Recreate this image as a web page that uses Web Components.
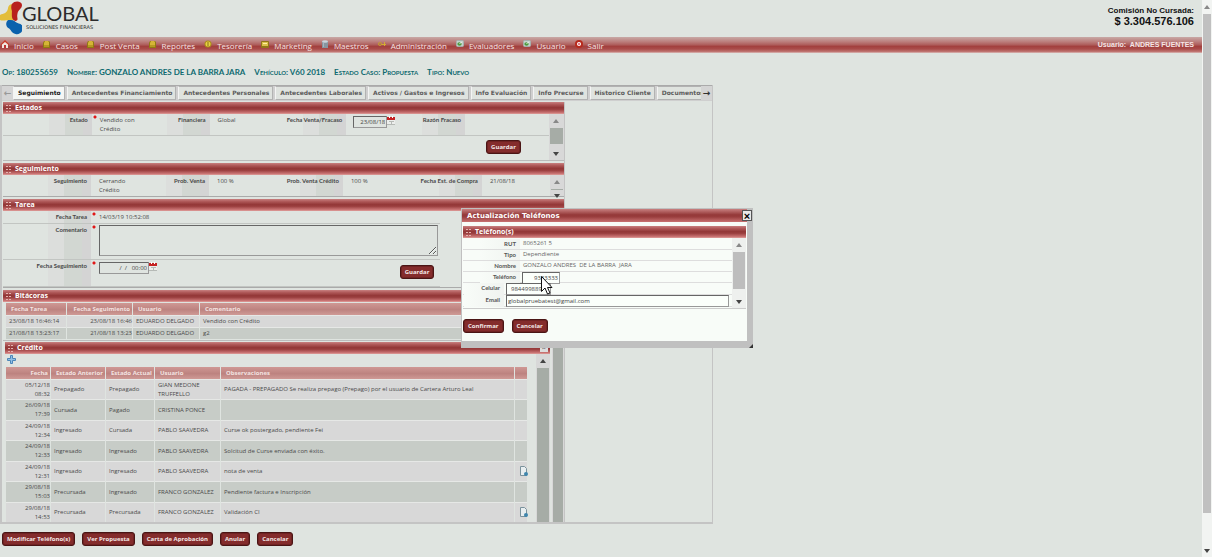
<!DOCTYPE html>
<html lang="es">
<head>
<meta charset="utf-8">
<title>Global Soluciones Financieras</title>
<style>
html,body{margin:0;height:100%}
body{background:#dfe4e0;font:6px/9px "Open Sans",sans-serif;color:#4a4a4a;overflow:hidden}
</style>
</head>
<body>
<credit-app></credit-app>
<script>
const define=(name,html,setup)=>customElements.define(name,class extends HTMLElement{
  connectedCallback(){
    if(this.shadowRoot)return;
    const t=document.createElement('template');
    t.innerHTML=typeof html==='function'?html(this):html;
    this.attachShadow({mode:'open'}).append(t.content.cloneNode(true));
    if(setup)setup(this,this.shadowRoot);
  }
});

define('action-button',`<style>
:host{display:block}
button{display:block;box-sizing:border-box;height:14px;padding:0 4px;border:1px solid #4a1515;border-radius:3px;background:#842c2c;color:#f3e8e8;font:bold 6px/10px "Open Sans",sans-serif;white-space:nowrap;box-shadow:inset 0 0 0 1px #702323}
</style><button type="button"><slot></slot></button>`);

define('scroll-track',`<style>
:host{display:flex;flex-direction:column;align-items:center;box-sizing:border-box;background:var(--track,#d8d8d8);padding:0 1px}
i{flex:none;border:3px solid transparent;width:0;height:0}
.u{border-top:0;border-bottom:4px solid var(--up,#888);margin:5px 0}
.d{border-bottom:0;border-top:4px solid #444;margin:4px 0}
b{width:100%;height:var(--thumb,auto);flex:var(--grow,0 0 auto);background:var(--bar,#a6aca6)}
span{flex:var(--rest,0)}
:host([open]) .d,:host([bare]) i{display:none}
</style><i class="u"></i><b></b><span></span><i class="d"></i>`);

define('title-bar',`<style>
:host{display:flex;align-items:center;box-sizing:border-box;height:12px;padding:0 2px 0 3px;gap:4px;background:linear-gradient(#c88080 0,#b05a5a 20%,#943838 45%,#993d3d 60%,#c87272 88%,#dfa09c);color:#fff}
h2{flex:1;margin:0;font:bold 7px/10px "Open Sans",sans-serif;white-space:nowrap}
svg{flex:none}
</style><svg width="5" height="8" fill="#e3b3b0"><path d="M0 1h2v1H0zM3 1h2v1H3zM0 4h2v1H0zM3 4h2v1H3zM0 7h2v1H0zM3 7h2v1H3z"/></svg><h2><slot></slot></h2><slot name="tool"></slot>`);

define('calendar-icon',`<style>:host{display:block;height:9px}svg{display:block}</style>
<svg width="8" height="9"><path fill="#eceeec" d="M0 2h8v7H0z"/><path fill="#c42222" d="M0 1h8v3H0z"/><path fill="#fff" d="M2 0h1v2H2zM5 0h1v2H5z"/><path stroke="#b6bab6" fill="none" d="M0 8.5h8M2 5.500h5M4.500 5v4"/></svg>`);

const icons={
 home:'<path fill="#c83a28" d="M0 4 4 0l4 4v1H0z"/><path fill="#f2e7e0" d="M1 4.500 4 2l3 2.500V8H1z"/><path fill="#b33" d="M3 5h2v3H3z"/>',
 folder:'<path fill="#8f7a12" d="M1 1h5l1 1v6H0V3z"/><path fill="#d5b536" d="M2 1h3l1 1v3H1V3z"/><path fill="#b89822" d="M1 5h5v2H1z"/>',
 coin:'<circle cx="4" cy="4" r="3.500" fill="#a88c1a"/><circle cx="4" cy="4" r="2.500" fill="#e8d044"/><path stroke="#8a7314" d="M4 2v4"/>',
 card:'<rect y="1" width="8" height="7" rx="1" fill="#927718"/><rect x="1" y="2" width="6" height="4" fill="#dcc04a"/><path stroke="#fff0a0" d="M2 3.500h4"/>',
 db:'<path fill="#8795a0" d="M1 1h6v7H1z"/><ellipse cx="4" cy="1.500" rx="3" ry="1.300" fill="#cbd5dc"/><path stroke="#a9b4bd" d="M2.500 3v4"/>',
 key:'<circle cx="2" cy="4" r="1.500" fill="none" stroke="#c3a02c"/><path stroke="#d3ad33" d="M3.500 4.500H8M6.500 2v4"/>',
 check:'<rect x=".5" y=".5" width="7" height="6" rx="1" fill="#c4d1cc" stroke="#a6b0ae"/><ellipse cx="3.500" cy="4" rx="2.200" ry="1.700" fill="#4d9c3e"/><path stroke="#e9f2e6" d="M3.500 3.500 6 2"/>',
 exit:'<circle cx="4" cy="4" r="4" fill="#b72a1d"/><circle cx="4" cy="4" r="2" fill="#fff"/><circle cx="4" cy="4" r="1" fill="#d56"/>'
};
define('menu-item',el=>`<style>
:host{display:flex;align-items:center;gap:5px}
a{color:#f5e4e4;text-decoration:none;font:8px/12px "Open Sans",sans-serif;white-space:nowrap;padding-top:1px}
svg{flex:none;margin-bottom:3px}
</style><svg width="8" height="8">${icons[el.getAttribute('icon')]}</svg><a href="#"><slot></slot></a>`);

define('main-menu',`<style>
:host{display:flex;align-items:center;box-sizing:border-box;height:16px;padding:0 8px 0 1px;background:linear-gradient(#c8a9a6 0,#bb7d7b 30%,#ad5b59 50%,#a23f3d 58%,#aa4c4a 75%,#c07673 92%,#ddc0bd)}
nav{display:flex;gap:9px}
p{margin:0 0 0 auto;color:#f6e6e6;font:bold 7px/12px "Liberation Sans",sans-serif;white-space:pre}
</style><nav>
<menu-item icon="home">Inicio</menu-item><menu-item icon="folder">Casos</menu-item><menu-item icon="folder">Post Venta</menu-item><menu-item icon="folder">Reportes</menu-item><menu-item icon="coin">Tesorería</menu-item><menu-item icon="card">Marketing</menu-item><menu-item icon="db">Maestros</menu-item><menu-item icon="key">Administración</menu-item><menu-item icon="check">Evaluadores</menu-item><menu-item icon="check">Usuario</menu-item><menu-item icon="exit">Salir</menu-item>
</nav><p>Usuario:  ANDRES FUENTES</p>`);

define('brand-header',`<style>
:host{display:flex;justify-content:space-between;height:37px}
.logo{display:flex}
.name{padding:2px 0 0;color:#2c2c2c}
.name b{display:block;font:20px/22px Lato,sans-serif}
.name small{display:block;padding-left:4px;font:5px/6px "DejaVu Sans",sans-serif}
.sum{padding:6px 8px 0 0;text-align:right;color:#111;font:bold 8px/10px "Liberation Sans",sans-serif}
.sum strong{display:block;font-size:11px;line-height:11px}
</style>
<div class="logo"><svg width="22" height="36" viewBox="0 0 24 36" preserveAspectRatio="none"><path fill="#e3bd3a" d="M0 15c4-2 8-1 9-8 1-3 5-4 5-1-1 7 0 10 2 13l-5 4c-2-5-7-1-11-3z"/><path fill="#b8201d" d="M13 4c3-4 11-3 11 1 0 4-4 4-5 9-1 4 2 6-2 7-5-1-4-6-4-10-1-3-1-5 0-7z"/><path fill="#0b62ad" d="M9 20c4 0 6 0 8 2 2 2 8 1 8 6 0 4-4 7-8 6-5-1-5-5-8-6-3-2-3-6 0-8z"/></svg>
<div class="name"><b>GLOBAL</b><small>SOLUCIONES FINANCIERAS</small></div></div>
<div class="sum">Comisión No Cursada:<strong>$ 3.304.576.106</strong></div>`);

define('case-summary',`<style>
:host{display:flex;gap:9px;padding:12px 2px 6px;font:bold small-caps 8px/14px Lato,sans-serif;color:#0d6a6f;white-space:nowrap}
</style><span>Op: 180255659</span><span>Nombre: GONZALO ANDRES DE LA BARRA JARA</span><span>Vehículo: V60 2018</span><span>Estado Caso: Propuesta</span><span>Tipo: Nuevo</span>`);

define('case-tabs',`<style>
:host{display:flex;height:16px;background:#cfcfcf;border-top:1px solid #aaa;box-sizing:border-box;overflow:hidden}
.t{display:flex;gap:2px;flex:1;overflow:hidden}
button{flex:none;height:14px;margin:0;padding:0 3px 0 4px;border:1px solid #b2b2b2;border-left-color:#f4f4f4;background:#dfe3df;color:#5c5c5c;font:bold 6px/12px "DejaVu Sans",sans-serif}
button[aria-selected=true]{background:#f4f6f4;color:#222}
.a{width:11px;padding:0;border:0;background:#d4d4d4;font-size:9px;color:#999}
.n{color:#333}
</style><button class="a" aria-label="Anterior">←</button><div class="t" role="tablist"></div><button class="a n" aria-label="Siguiente">→</button>`,(el,r)=>{
 const t=r.querySelector('.t');
 ['Seguimiento','Antecedentes Financiamiento','Antecedentes Personales','Antecedentes Laborales','Activos / Gastos e Ingresos','Info Evaluación','Info Precurse','Historico Cliente','Documentos'].forEach((n,i)=>{
  const b=document.createElement('button');b.setAttribute('role','tab');b.setAttribute('aria-selected',i===0);b.textContent=n;t.append(b);});
});

const fieldCss=`
.k{box-sizing:border-box;text-align:right;padding:2px 4px 0 0;font:bold 6px/8px Lato,sans-serif;color:#484848;white-space:nowrap;background:linear-gradient(90deg,#dcdedc 16px,#d2d7d2 16px 34px,#d4d4d4 34px) right/43px 100% no-repeat}
.v{box-sizing:border-box;padding:2px 0 0 8px;line-height:9px}
.req{background:radial-gradient(circle at 3px 3px,#e01818 1px,transparent 2px) no-repeat}
input,textarea{box-sizing:border-box;margin:0;border:1px solid #999;border-top-color:#666;border-left-color:#666;background:transparent;color:#444;font:6px/9px "Open Sans",sans-serif;padding:0 1px}
.dt{display:flex}`;

define('status-panel',`<style>${fieldCss}
:host{display:flex;height:46px;border-bottom:1px solid #bbb;margin-bottom:2px}
.c{flex:1}
.g{display:grid;grid-template-columns:89fr 55fr 63fr 60fr 77fr 63fr 56fr 84fr;height:21px;border-bottom:1px solid #c2c5c2}
.dt{padding:2px 0 0 7px}input{width:34px;height:12px;text-align:right}
.b{display:flex;justify-content:flex-end;padding:4px 28px 0 0}
scroll-track{width:15px;--thumb:16px;--rest:1}
</style><div class="c"><div class="g"><label class="k">Estado</label><div class="v req">Vendido con Crédito</div><label class="k">Financiera</label><div class="v">Global</div><label class="k" for="f">Fecha Venta/Fracaso</label><div class="dt"><input id="f" value="23/08/18"><calendar-icon></calendar-icon></div><label class="k">Razón Fracaso</label><div></div></div>
<div class="b"><action-button>Guardar</action-button></div></div><scroll-track></scroll-track>`);

define('followup-panel',`<style>${fieldCss}
:host{display:flex;height:21px;border-bottom:1px solid #aaa;margin-bottom:2px}
.g{flex:1;display:grid;grid-template-columns:88fr 55fr 63fr 60fr 74fr 65fr 74fr 68fr}
scroll-track{width:14px;--thumb:1px;--rest:1}
</style><div class="g"><label class="k">Seguimiento</label><div class="v">Cerrando Crédito</div><label class="k">Prob. Venta</label><div class="v">100 %</div><label class="k">Prob. Venta Crédito</label><div class="v">100 %</div><label class="k">Fecha Est. de Compra</label><div class="v">21/08/18</div></div><scroll-track></scroll-track>`);

define('task-panel',`<style>${fieldCss}
:host{display:block;border-bottom:1px solid #aaa;margin-bottom:2px}
.r{display:grid;grid-template-columns:88px 1fr;width:78%;border-bottom:1px solid #c2c5c2}
.k{padding-top:2px}
.one{height:12px}.two{height:35px}.three{height:26px}
textarea{display:block;width:100%;height:31px;resize:both}
.two .v{padding-top:1px;padding-right:2px}
.three .v{display:flex}input{width:50px;height:12px;text-align:right}
action-button{margin:3px 6px 0 auto}
</style><div class="r one"><label class="k">Fecha Tarea</label><div class="v req">14/03/19 10:52:08</div></div>
<div class="r two"><label class="k" for="c">Comentario</label><div class="v req"><textarea id="c"></textarea></div></div>
<div class="r three"><label class="k" for="s">Fecha Seguimiento</label><div class="v req"><input id="s" value="/  /   00:00"><calendar-icon></calendar-icon><action-button>Guardar</action-button></div></div>`);

const tableCss=`
table{border-collapse:separate;border-spacing:1px 0;table-layout:fixed;width:100%}
th{height:12px;padding:0 3px 0 5px;text-align:left;color:#f4e4e2;font:bold 6px/11px "Open Sans",sans-serif;background:linear-gradient(#cf9894,#bd8380 55%,#cf9a96);white-space:nowrap}
td{padding:0 3px;line-height:9px;background:#d8d8d8;border-top:1px solid #e6e8e6}
tr:nth-child(even) td{background:#c7ccc7}
.n{text-align:right;padding-right:0}th.n{padding-left:0;padding-right:2px}`;

define('log-table',`<style>${tableCss}
:host{display:block;padding:1px 16px 0 2px;border-bottom:1px solid #bbb;margin:0 0 1px;height:37px}
td{height:11px;white-space:nowrap}
</style><table><colgroup><col style="width:60px"><col style="width:65px"><col style="width:66px"><col></colgroup>
<thead><tr><th>Fecha Tarea</th><th class="n">Fecha Seguimiento</th><th>Usuario</th><th>Comentario</th></tr></thead>
<tbody><tr><td>23/08/18 16:46:14</td><td class="n">23/08/18 16:46</td><td>EDUARDO DELGADO</td><td>Vendido con Crédito</td></tr>
<tr><td>21/08/18 13:23:17</td><td class="n">21/08/18 13:23</td><td>EDUARDO DELGADO</td><td>g2</td></tr></tbody></table>`);

define('credit-table',`<style>${tableCss}
:host{display:block;padding:0 8px 0 0}
.add{display:block;border:0;background:none;padding:0;margin:0 0 3px 2px;height:10px}
.add svg{display:block}
td{height:19px}tr:nth-child(even) td{height:20px}
td svg{display:block;margin-left:2px}
</style><button class="add" aria-label="Agregar"><svg width="9" height="9"><path fill="#8fc0e6" stroke="#4c86b8" d="M3.500.5h2v3h3v2h-3v3h-2v-3h-3v-2h3z"/></svg></button>
<table><colgroup><col style="width:44px"><col style="width:54px"><col style="width:48px"><col style="width:65px"><col><col style="width:12px"></colgroup>
<thead><tr><th class="n">Fecha</th><th>Estado Anterior</th><th>Estado Actual</th><th>Usuario</th><th>Observaciones</th><th></th></tr></thead><tbody></tbody></table>`,(el,r)=>{
 const doc='<svg width="8" height="11"><path fill="#e8eef0" stroke="#7a929c" d="M.5.5h4l2 2v7h-6z"/><circle cx="6" cy="8" r="2" fill="#3f86ad"/></svg>';
 r.querySelector('tbody').innerHTML=[
 ['05/12/18','08:32','Prepagado','Prepagado','GIAN MEDONE TRUFFELLO','PAGADA - PREPAGADO Se realiza prepago (Prepago) por el usuario de Cartera Arturo Leal'],
 ['26/09/18','17:39','Cursada','Pagado','CRISTINA PONCE',''],
 ['24/09/18','12:34','Ingresado','Cursada','PABLO SAAVEDRA','Curse ok postergado, pendiente Fei'],
 ['24/09/18','12:33','Ingresado','Ingresado','PABLO SAAVEDRA','Solcitud de Curse enviada con éxito.'],
 ['24/09/18','12:31','Ingresado','Ingresado','PABLO SAAVEDRA','nota de venta',1],
 ['29/08/18','15:03','Precursada','Ingresado','FRANCO GONZALEZ','Pendiente factura e Inscripción'],
 ['29/08/18','14:53','Precursada','Precursada','FRANCO GONZALEZ','Validación CI',1]
 ].map(([d,h,a,b,u,o,f])=>`<tr><td class="n">${d}<br>${h}</td><td>${a}</td><td>${b}</td><td>${u}</td><td>${o}</td><td>${f?doc:''}</td></tr>`).join('');
});

define('phone-dialog',`<style>${fieldCss}
:host{display:block;box-sizing:border-box;background:#f8fcf8;border:1px solid #c0c0c0;border-width:1px 6px 7px 1px;color:#666}
header{display:flex;align-items:center;height:13px;padding:0 0 0 5px;background:linear-gradient(#c88080,#943838 45%,#993d3d 60%,#c87272);color:#fff}
h1{flex:1;margin:0;font:bold 7px/12px "DejaVu Sans",sans-serif}
.x{width:10px;height:11px;padding:0;margin:0 -5px 0 0;border:1px solid #555;background:#e8e8e8;color:#000;font:bold 11px/8px "Liberation Sans",sans-serif}
.box{display:flex;margin:4px 1px 0 1px;border-bottom:1px solid #ccc;height:82px;flex-direction:column}
.m{display:flex;flex:1}.f{flex:1;padding-top:1px}
.r{display:grid;grid-template-columns:57px 1fr;height:10px;border-bottom:1px solid #ddd}
.r.s{grid-template-columns:41px 1fr;height:11px}
.k{padding-top:1px;background:linear-gradient(90deg,#f8fcf8,#f0f3f0) right/40px 100% no-repeat;color:#555}
.v{padding:0 0 0 3px;white-space:pre}
.t{width:38px;text-align:right}.r input{height:12px;display:block;background:#fbfffb}
.c{width:45px;padding-left:4px}.e{width:100%}
.v.i{padding:0 3px 0 2px}
scroll-track{width:14px;--thumb:37px;--rest:1;--track:#eef0ee;--bar:#bdbdbd}
footer{display:flex;gap:8px;padding:10px 1px 0}
</style><header><h1>Actualización Teléfonos</h1><button class="x" aria-label="Cerrar">×</button></header>
<div class="box"><title-bar>Teléfono(s)</title-bar><div class="m"><div class="f">
<div class="r"><label class="k">RUT</label><div class="v">8065261 5</div></div>
<div class="r"><label class="k">Tipo</label><div class="v">Dependiente</div></div>
<div class="r"><label class="k">Nombre</label><div class="v">GONZALO ANDRES  DE LA BARRA  JARA</div></div>
<div class="r"><label class="k" for="t">Teléfono</label><div class="v i"><input id="t" class="t" value="9333333"></div></div>
<div class="r s"><label class="k" for="c">Celular</label><div class="v i"><input id="c" class="c" value="984499889"></div></div>
<div class="r s"><label class="k" for="e">Email</label><div class="v i"><input id="e" class="e" value="globalpruebatest@gmail.com"></div></div>
</div><scroll-track></scroll-track></div></div>
<footer><action-button>Confirmar</action-button><action-button>Cancelar</action-button></footer>`);

define('credit-app',`<style>
:host{display:grid;grid-template-columns:1fr 10px;height:100%}
.page{position:relative;min-width:0}
.main{width:min(100%,713px);box-sizing:border-box;border:2px solid #c4c4c4;border-width:0 1px 2px 2px}
.left{width:79%;margin-top:1px;padding-left:1px;border-right:1px solid #c4c4c4}
.credit{display:flex;gap:2px}
.win{flex:1;margin-left:2px}
.in{display:flex}.in credit-table{flex:1}
.in scroll-track{width:14px;--grow:1}
.outer{width:12px;--grow:1;--rest:0}
.x{width:8px;height:8px;padding:0;border:0;background:#ddd;color:#555;font:7px/8px "Liberation Sans",sans-serif}
phone-dialog{position:absolute;left:461px;top:208px;width:292px;height:140px}
.cur{position:absolute;left:541px;top:276px}
.grip{position:absolute;left:749px;top:344px}
footer{display:flex;gap:7px;padding:8px 2px}
.ps{--track:#f2f4f2;--bar:#c0c0c0;--grow:10;--rest:0 0 32px}
</style>
<div class="page"><brand-header></brand-header><main-menu></main-menu><case-summary></case-summary>
<div class="main"><case-tabs></case-tabs><div class="left">
<title-bar>Estados</title-bar><status-panel></status-panel>
<title-bar>Seguimiento</title-bar><followup-panel></followup-panel>
<title-bar>Tarea</title-bar><task-panel></task-panel>
<title-bar>Bitácoras</title-bar><log-table></log-table>
<div class="credit"><div class="win"><title-bar>Crédito<button class="x" slot="tool" aria-label="Cerrar">×</button></title-bar><div class="in"><credit-table></credit-table><scroll-track open style="--up:#444"></scroll-track></div></div><scroll-track class="outer" bare></scroll-track></div>
</div></div>
<footer><action-button>Modificar Teléfono(s)</action-button><action-button>Ver Propuesta</action-button><action-button>Carta de Aprobación</action-button><action-button>Anular</action-button><action-button>Cancelar</action-button></footer>
<phone-dialog role="dialog"></phone-dialog>
<svg class="grip" width="4" height="4"><path fill="#333" d="M4 0v4H0z"/></svg>
<svg class="cur" width="12" height="19"><path fill="#fff" stroke="#111" d="M.5.5v15l3.500-3.500 2.500 6 2.500-1-2.500-5.500h4.500z"/></svg>
</div><scroll-track class="ps"></scroll-track>`);
</script>
</body>
</html>
